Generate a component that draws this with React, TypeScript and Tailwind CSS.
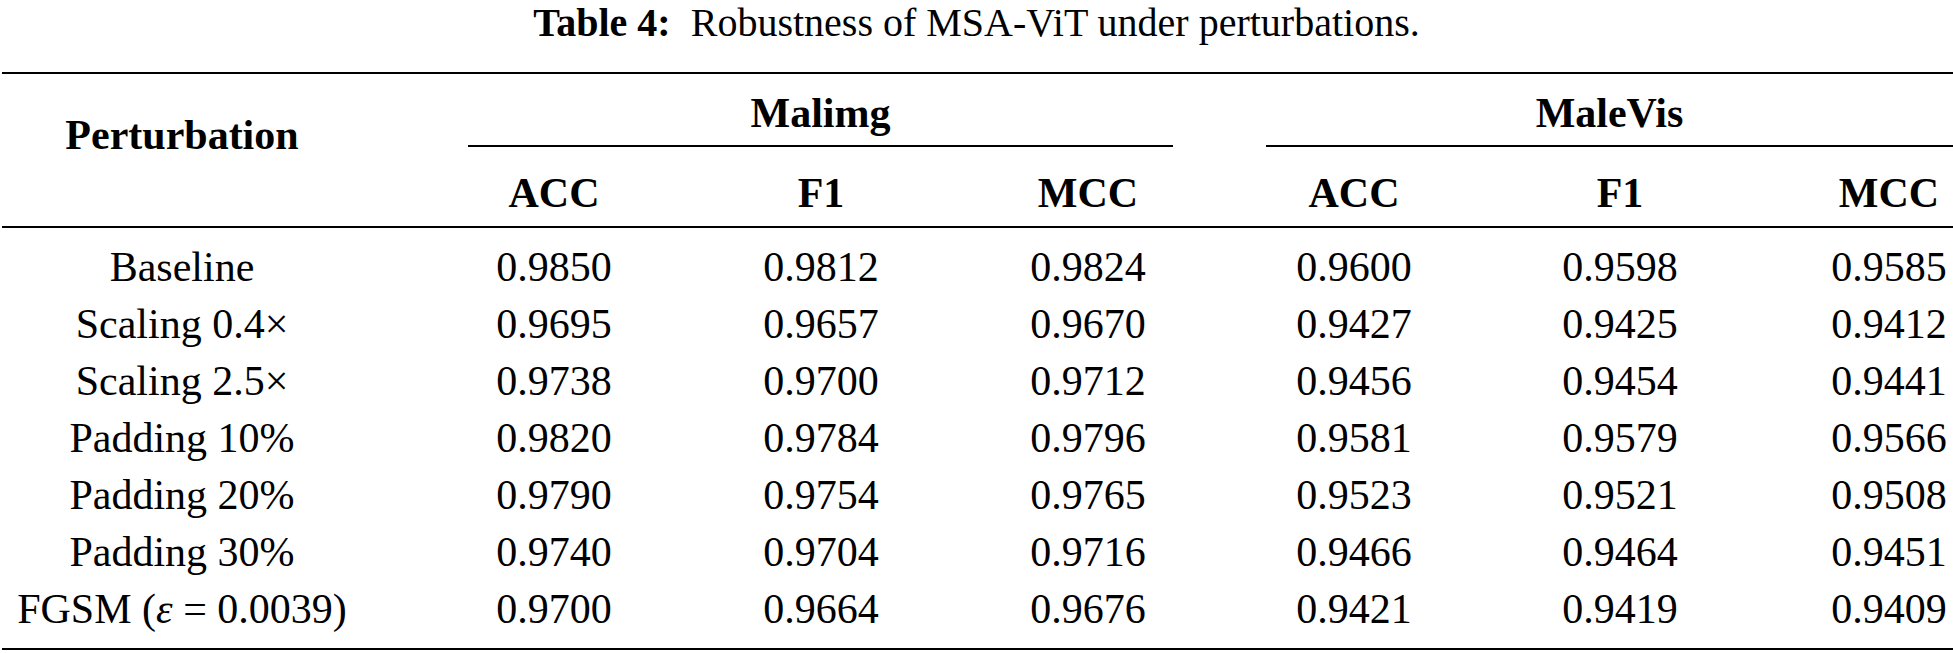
import React from "react";

const rows: [React.ReactNode, string[]][] = [
  ["Baseline", ["0.9850", "0.9812", "0.9824", "0.9600", "0.9598", "0.9585"]],
  ["Scaling 0.4×", ["0.9695", "0.9657", "0.9670", "0.9427", "0.9425", "0.9412"]],
  ["Scaling 2.5×", ["0.9738", "0.9700", "0.9712", "0.9456", "0.9454", "0.9441"]],
  ["Padding 10%", ["0.9820", "0.9784", "0.9796", "0.9581", "0.9579", "0.9566"]],
  ["Padding 20%", ["0.9790", "0.9754", "0.9765", "0.9523", "0.9521", "0.9508"]],
  ["Padding 30%", ["0.9740", "0.9704", "0.9716", "0.9466", "0.9464", "0.9451"]],
  [
    <>
      FGSM (<i>ε</i> = 0.0039)
    </>,
    ["0.9700", "0.9664", "0.9676", "0.9421", "0.9419", "0.9409"],
  ],
];

const colCls = [
  "ml-[59px] w-[266px]",
  "w-[268px]",
  "w-[266px]",
  "w-[266px]",
  "w-[266px]",
  "ml-[72px] w-[128px]",
];

const heads = ["ACC", "F1", "MCC", "ACC", "F1", "MCC"];

export default function App() {
  return (
    <div className="w-[1953px] h-[653px] overflow-hidden bg-white text-black font-['Liberation_Serif','Times_New_Roman',serif]">
      <div className="h-[72px] text-center text-[40px] leading-[45px] whitespace-pre">
        <span className="font-bold">Table 4:</span>
        {"  Robustness of MSA-ViT under perturbations."}
      </div>
      <div className="ml-[2px] h-[2px] bg-black" />
      <div className="flex h-[152px] text-[42px] leading-[57px] font-bold">
        <div className="ml-[2px] w-[360px] pt-[33px] text-center">Perturbation</div>
        <div className="flex flex-col">
          <div className="flex">
            <div className="ml-[106px] w-[705px] pt-[11px] pb-[3px] border-b-2 border-black text-center">
              Malimg
            </div>
            <div className="ml-[93px] w-[687px] pt-[11px] pb-[3px] border-b-2 border-black text-center">
              MaleVis
            </div>
          </div>
          <div className="flex pt-[18px]">
            {heads.map((h, i) => (
              <div key={i} className={`${colCls[i]} text-center whitespace-nowrap`}>
                {h}
              </div>
            ))}
          </div>
        </div>
      </div>
      <div className="ml-[2px] h-[2px] bg-black" />
      <div className="pt-[11px] pb-[10px] text-[42px] leading-[57px]">
        {rows.map(([label, vals], r) => (
          <div key={r} className="flex pl-[2px]">
            <div className="w-[360px] text-center whitespace-nowrap">{label}</div>
            {vals.map((v, i) => (
              <div key={i} className={`${colCls[i]} text-center whitespace-nowrap`}>
                {v}
              </div>
            ))}
          </div>
        ))}
      </div>
      <div className="ml-[2px] h-[2px] bg-black" />
    </div>
  );
}
